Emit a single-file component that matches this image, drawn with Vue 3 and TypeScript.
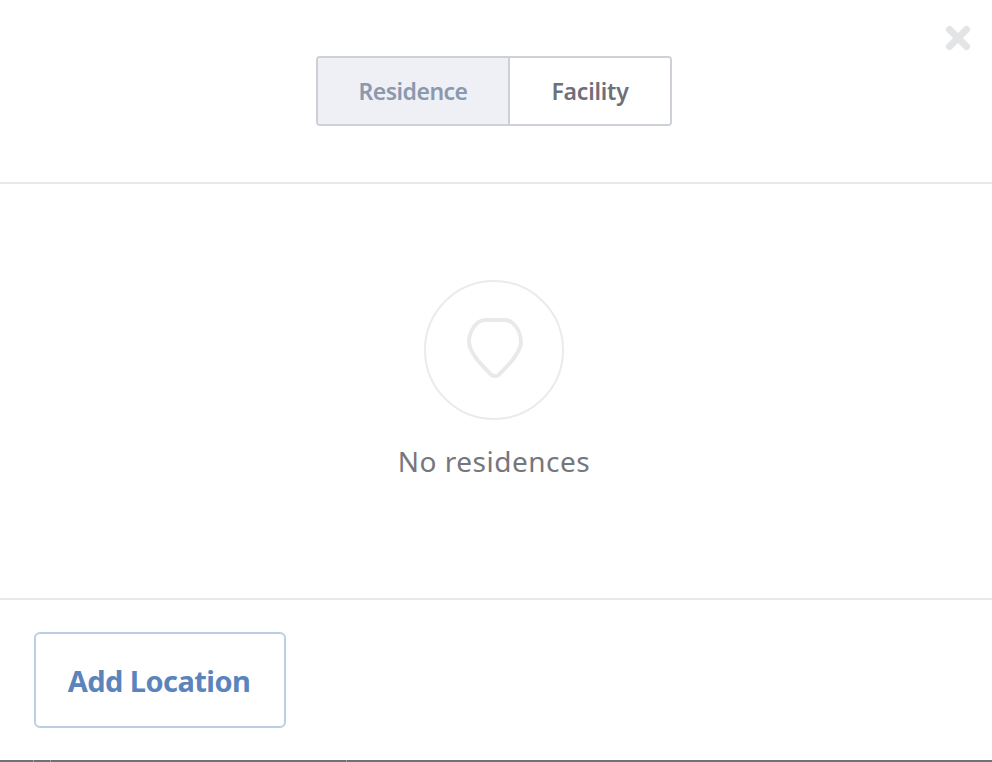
<template>
  <div class="modal">
    <button class="close" type="button" aria-label="Close">
      <svg width="26" height="26" viewBox="0 0 26 26">
        <path d="M4.500 4.500 21.500 21.500M21.500 4.500 4.500 21.500" fill="none" stroke="#e3e4e6" stroke-width="7" stroke-linecap="round" />
      </svg>
    </button>

    <header class="head">
      <div class="toggle">
        <button
          v-for="tab in tabs"
          :key="tab"
          type="button"
          :class="['tab', `tab-${tab.toLowerCase()}`, { active: tab === current }]"
          @click="current = tab"
        >{{ tab }}</button>
      </div>
    </header>

    <main class="body">
      <div class="ring">
        <svg class="pin" width="56" height="60" viewBox="0 0 56 60">
          <path
            d="M18 2H38C41 2 43 3 45 4.500C50 8.500 54 16 54 24C54 30 50 36 46 41.500C41 47.500 36 52.500 32 56.500C31 57.500 30 58 29 58H27C26 58 25 57.500 24 56.500C20 52.500 15 47.500 10 41.500C6 36 2 30 2 24C2 16 6 8.500 11 4.500C13 3 15 2 18 2Z"
            fill="none" stroke="#e9e9eb" stroke-width="4"
          />
        </svg>
      </div>
      <p class="empty">No residences</p>
    </main>

    <footer class="foot">
      <button class="add" type="button">Add Location</button>
    </footer>

    <div class="edge">
      <i class="tick tick-a"></i>
      <i class="tick tick-b"></i>
      <i class="tick tick-c"></i>
    </div>
  </div>
</template>

<script setup lang="ts">
import { ref } from 'vue'

const tabs = ['Residence', 'Facility']
const current = ref('Residence')
</script>

<style>
html, body {
  margin: 0;
  background: #fff;
}
</style>

<style scoped>
.modal {
  position: relative;
  width: 992px;
  height: 762px;
  overflow: hidden;
  display: flex;
  flex-direction: column;
  background: #fff;
  font-family: "Noto Sans", "Open Sans", sans-serif;
}

button {
  font-family: inherit;
  cursor: pointer;
}

.close {
  position: absolute;
  top: 25px;
  left: 945px;
  width: 26px;
  height: 26px;
  padding: 0;
  border: 0;
  background: none;
  display: flex;
}

.head {
  box-sizing: border-box;
  padding: 56px 4px 0 0;
  display: flex;
  justify-content: center;
  border-bottom: 2px solid #e8e8ea;
  flex: none;
  height: 184px;
}

.toggle {
  display: flex;
  height: 70px;
  box-sizing: border-box;
  border: 2px solid #cdd0d6;
  border-radius: 4px;
  overflow: hidden;
}

.tab {
  border: 0;
  background: #fff;
  color: #6e7079;
  font-size: 23px;
  font-weight: 600;
  padding: 0;
}

.tab-residence {
  width: 192px;
  border-right: 2px solid #cdd0d6;
  letter-spacing: -0.5px;
}

.tab-facility {
  width: 160px;
  letter-spacing: -0.2px;
}

.tab.active {
  background: #eef0f5;
  color: #8b98ae;
}

.body {
  height: 416px;
  flex: none;
  box-sizing: border-box;
  padding: 96px 4px 0 0;
  display: flex;
  flex-direction: column;
  align-items: center;
  border-bottom: 2px solid #e8e8ea;
}

.ring {
  width: 140px;
  height: 140px;
  box-sizing: border-box;
  border: 2px solid #ebebed;
  border-radius: 50%;
  display: flex;
  align-items: center;
  justify-content: center;
}

.pin {
  margin: 0 0 4px 2px;
}

.empty {
  margin: 20px 0 0;
  color: #75767e;
  font-size: 28px;
  line-height: 42px;
  letter-spacing: 0.5px;
}

.foot {
  flex: 1;
  padding: 32px 34px 0;
}

.add {
  width: 252px;
  height: 96px;
  border: 2px solid #bccde6;
  border-radius: 6px;
  background: #fff;
  color: #5b84bd;
  font-size: 29px;
  font-weight: 700;
  letter-spacing: -0.55px;
  padding: 0 2px 0 0;
}

.edge {
  position: absolute;
  left: 0;
  right: 0;
  bottom: 0;
  height: 2px;
  background: #6f7078;
}

.tick {
  position: absolute;
  top: 0;
  width: 1px;
  height: 2px;
  background: #a0a1a7;
}

.tick-a { left: 33px; }
.tick-b { left: 50px; }
.tick-c { left: 346px; }
</style>
